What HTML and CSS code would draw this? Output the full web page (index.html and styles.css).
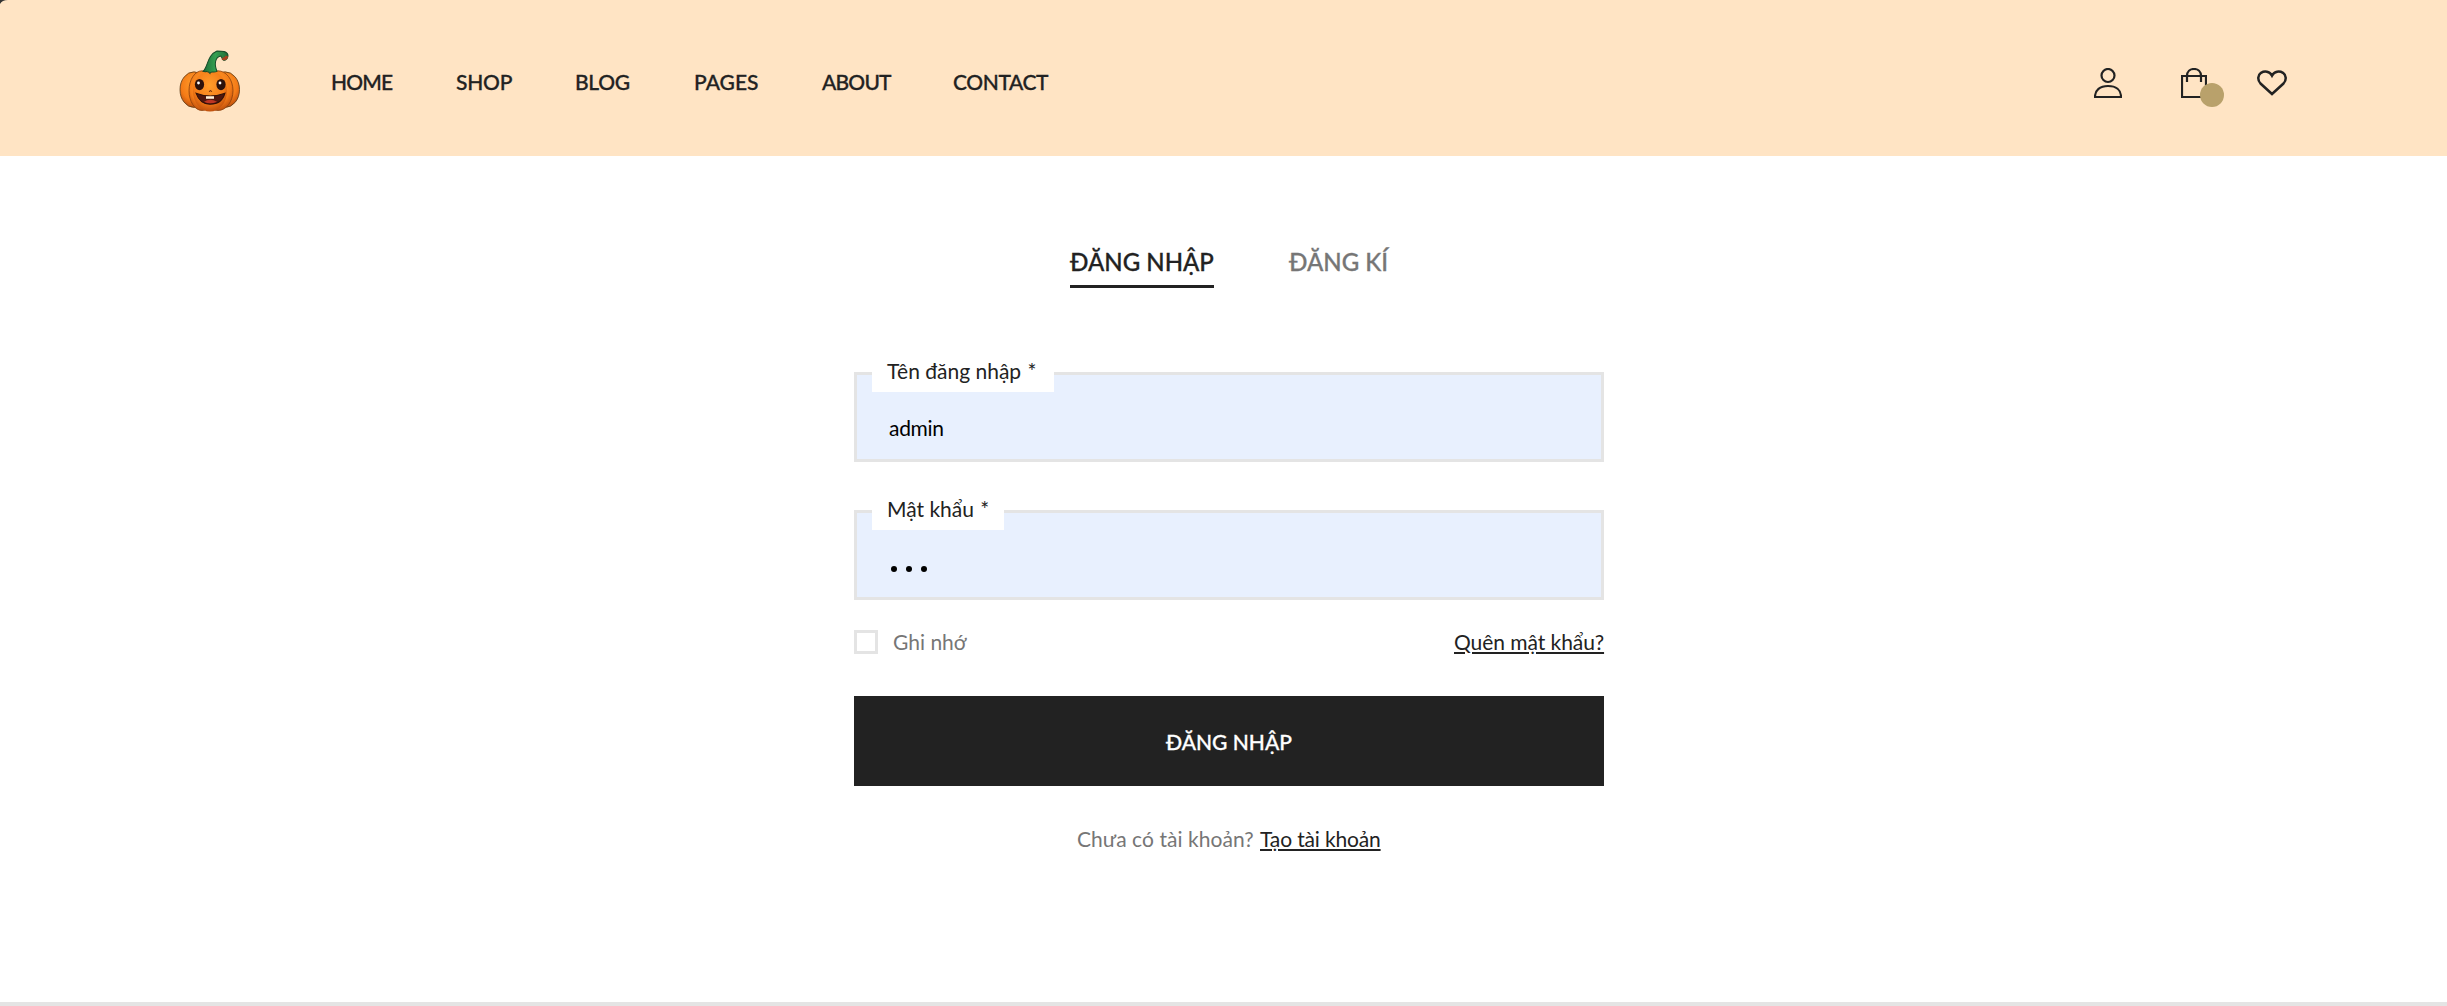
FILE: index.html
```html
<!DOCTYPE html>
<html lang="vi">
<head>
<meta charset="utf-8">
<title>Đăng nhập</title>
<link rel="stylesheet" href="styles.css">
</head>
<body>
<header class="header">
  <svg class="corner" width="8" height="4" viewBox="0 0 8 4"><path d="M0 0H8Q2 0 0 4Z" fill="#333"/></svg>
  <a class="logo">
    <svg width="62" height="63" viewBox="0 0 62 62" preserveAspectRatio="none">
      <defs>
        <radialGradient id="skin" cx=".48" cy=".35" r=".68"><stop offset="0" stop-color="#ff9d2b"/><stop offset=".65" stop-color="#f47b17"/><stop offset="1" stop-color="#b84a0c"/></radialGradient>
        <linearGradient id="stem"><stop offset="0" stop-color="#1c6c38"/><stop offset=".5" stop-color="#36a052"/><stop offset="1" stop-color="#1f6a37"/></linearGradient>
      </defs>
      <g stroke="#8a3f0c" stroke-width=".8" fill="url(#skin)">
        <ellipse cx="15" cy="39" rx="14" ry="17.500" stroke="#5a3a16"/>
        <ellipse cx="46" cy="39" rx="14.500" ry="17.500" stroke="#5a3a16"/>
        <ellipse cx="39" cy="40" rx="15" ry="19.500"/>
        <ellipse cx="23" cy="40" rx="13" ry="19.500"/>
        <ellipse cx="31" cy="40.500" rx="17" ry="20" stroke="none"/>
      </g>
      <path d="M24 21C29 17 28 5 38 1C43 1 48 1 49 5C49 10 44 12 43 8L42 6C36 7 35 14 38 21C34 23 32 20 31 23C29 20 27 22 24 21Z" fill="url(#stem)" stroke="#174b29"/>
      <path d="M43.500 8Q46 10 48 6" stroke="#a8401d" stroke-width="3" fill="none"/>
      <ellipse cx="20.500" cy="34" rx="4.600" ry="5.500" fill="#2c120c"/><ellipse cx="42" cy="34" rx="4.600" ry="5.500" fill="#2c120c"/>
      <circle cx="19.500" cy="32.500" r="1.400" fill="#fff"/><circle cx="41" cy="32.500" r="1.400" fill="#fff"/>
      <path d="M17 42.500Q31 48 46 42.500Q43 53.500 31 53.500Q21 53.500 17 42.500Z" fill="#50170e" stroke="#301008"/>
      <path d="M27 45.500H35V48H27Z" fill="#fff0d8"/><path d="M25 51Q31 47 38 51Q31 54 25 51Z" fill="#bd3524"/>
      <path d="M30 41L31.500 40L33 41" stroke="#6d280b" fill="none"/>
    </svg>
  </a>
  <nav class="nav">
    <a class="n1">HOME</a><a class="n2">SHOP</a><a class="n3">BLOG</a><a class="n4">PAGES</a><a class="n5">ABOUT</a><a class="n6">CONTACT</a>
  </nav>
  <div class="tools">
    <svg class="icon-user" width="28" height="30" viewBox="0 0 28 30"><ellipse cx="14" cy="7.500" rx="6.500" ry="6.500"/><path d="M1 29H27C27 22 22 18 14 18S1 22 1 29Z"/></svg>
    <a class="bag">
      <svg width="26" height="30" viewBox="0 0 26 30"><path d="M1 8H25V29H1ZM6 14V8C6 3.500 9 1 13 1S20 3.500 20 8V14"/></svg>
      <span class="badge"></span>
    </a>
    <svg class="icon-heart" width="30" height="26" viewBox="0 0 30 26"><path d="M15 24L3.500 13.500C.2 10 .8 5 4 2.800C7.500 .8 12.500 1 15 5.600C17.500 1 22.500 .8 26 2.800C29.200 5 29.800 10 26.500 13.500Z"/></svg>
  </div>
</header>
<main class="main">
  <div class="tabs"><a class="tab active"><span>ĐĂNG NHẬP</span></a><a class="tab second"><span>ĐĂNG KÍ</span></a></div>
  <form class="form">
    <div class="field"><label class="label-user"><span>Tên đăng nhập <b>*</b></span></label><div class="value">admin</div></div>
    <div class="field"><label class="label-pass"><span>Mật khẩu <b>*</b></span></label><div class="dots"><i></i><i></i><i></i></div></div>
    <div class="options"><span class="check"></span><span class="remember">Ghi nhớ</span><a class="forgot">Quên mật khẩu?</a></div>
    <button class="submit" type="button"><span>ĐĂNG NHẬP</span></button>
    <p class="register"><span class="question">Chưa có tài khoản?</span><a class="create">Tạo tài khoản</a></p>
  </form>
</main>
<footer class="footer"></footer>
</body>
</html>
```
FILE: styles.css
```css
* { box-sizing: border-box; }
body { margin: 0; height: 1006px; display: flex; flex-direction: column; overflow: hidden; background: #fff; color: #222; font: 21px/30px Lato, sans-serif; white-space: nowrap; }
.header { position: relative; height: 156px; flex: none; display: flex; align-items: flex-start; padding: 0 160px 0 179px; background: #ffe4c4; }
.corner { position: absolute; left: 0; top: 0; }
.logo { display: block; height: 63px; margin-top: 50px; }
.logo svg, .tools svg { display: block; }
.nav { display: flex; margin: 67px 0 0 90px; font-weight: 500; }
.nav a, .tabs, .submit { -webkit-text-stroke: .3px; }
.nav a { flex: none; }
.n1 { width: 125px; letter-spacing: -.8px; }
.n2 { width: 119px; letter-spacing: -.2px; }
.n3 { width: 119px; letter-spacing: -.3px; }
.n4 { width: 128px; }
.n5 { width: 131px; letter-spacing: -.8px; }
.n6 { width: 95px; letter-spacing: -.4px; }
.tools { display: flex; margin: 68px 0 0 auto; }
.tools svg { fill: none; stroke: #222; stroke-width: 2.2; }
.bag { position: relative; margin: 0 50px 0 59px; }
.badge { position: absolute; left: 19px; top: 15px; width: 24px; height: 24px; border-radius: 50%; background: #b9a16b; }
.tools .icon-heart { margin-top: 2px; stroke-width: 2.5; }
.main { flex: none; height: 846px; padding-top: 87px; }
.tabs { display: flex; margin-left: 1070px; gap: 75px; font-size: 24px; line-height: 38px; font-weight: 500; color: #767676; }
.tab { height: 45px; }
.active { width: 144px; color: #222; border-bottom: 3px solid #222; }
.form { width: 750px; margin: 84px 0 0 854px; }
.field { height: 90px; margin-bottom: 48px; border: 3px solid #e4e4e4; background: #e8f0fe; padding-left: 15px; }
.field label { display: block; height: 40px; margin-top: -23px; padding: 4px 0 0 15px; background: #fff; }
.field b { margin-left: 1px; font-weight: 400; }
.label-user { width: 182px; }
.label-pass { width: 132px; }
.value { margin: 21px 0 0 17px; color: #000; letter-spacing: -.3px; }
.dots { display: flex; gap: 9px; margin: 36px 0 0 19px; }
.dots i { width: 6px; height: 6px; border-radius: 50%; background: #000; }
.options { display: flex; align-items: center; height: 30px; margin-top: -21px; }
.check { width: 24px; height: 24px; border: 3px solid #e4e4e4; margin-right: 15px; }
.remember, .forgot { padding-bottom: 1px; }
.remember, .question { color: #767676; }
.forgot { margin-left: auto; width: 150px; letter-spacing: -.05px; }
.forgot, .create { text-decoration: underline; text-decoration-thickness: 2px; text-underline-offset: 2px; }
.submit { display: block; width: 750px; height: 90px; margin-top: 39px; border: 0; padding: 2px 0 0 312px; text-align: left; background: #222; color: #fff; font: inherit; font-weight: 500; }
.register { display: flex; margin: 38px 0 0 223px; }
.question { width: 183px; letter-spacing: .05px; }
.create { letter-spacing: -.15px; }
.footer { height: 4px; background: #e4e4e4; }
```
